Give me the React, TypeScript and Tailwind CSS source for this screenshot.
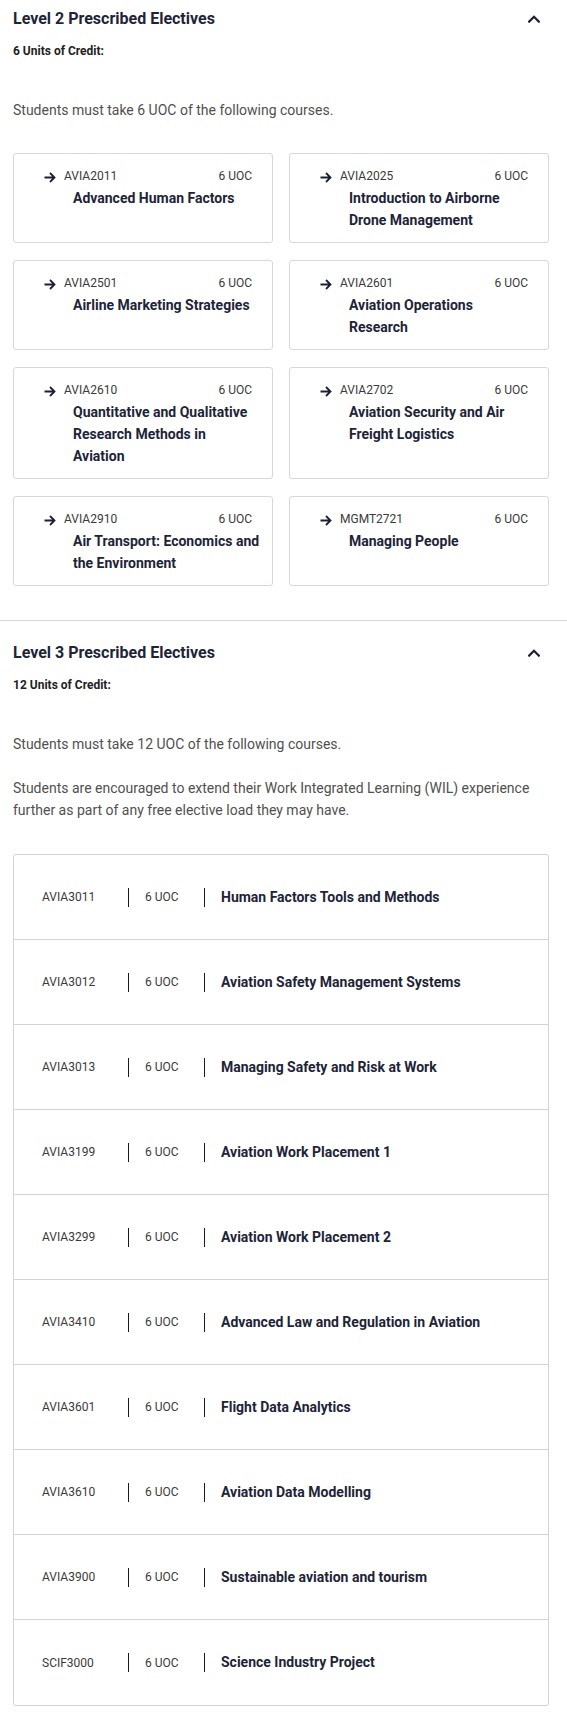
import React from "react";

type Course = { code: string; title: string };

const level2: Course[] = [
  { code: "AVIA2011", title: "Advanced Human Factors" },
  { code: "AVIA2025", title: "Introduction to Airborne Drone Management" },
  { code: "AVIA2501", title: "Airline Marketing Strategies" },
  { code: "AVIA2601", title: "Aviation Operations Research" },
  { code: "AVIA2610", title: "Quantitative and Qualitative Research Methods in Aviation" },
  { code: "AVIA2702", title: "Aviation Security and Air Freight Logistics" },
  { code: "AVIA2910", title: "Air Transport: Economics and the Environment" },
  { code: "MGMT2721", title: "Managing People" },
];

const level3: Course[] = [
  { code: "AVIA3011", title: "Human Factors Tools and Methods" },
  { code: "AVIA3012", title: "Aviation Safety Management Systems" },
  { code: "AVIA3013", title: "Managing Safety and Risk at Work" },
  { code: "AVIA3199", title: "Aviation Work Placement 1" },
  { code: "AVIA3299", title: "Aviation Work Placement 2" },
  { code: "AVIA3410", title: "Advanced Law and Regulation in Aviation" },
  { code: "AVIA3601", title: "Flight Data Analytics" },
  { code: "AVIA3610", title: "Aviation Data Modelling" },
  { code: "AVIA3900", title: "Sustainable aviation and tourism" },
  { code: "SCIF3000", title: "Science Industry Project" },
];

function ChevronUp() {
  return (
    <svg width="12" height="8" viewBox="0 0 12 8" className="mr-[9px]" fill="none">
      <path d="M1.2 6.6 L6 1.8 L10.8 6.6" stroke="#1b2133" strokeWidth="2.2" strokeLinecap="square" />
    </svg>
  );
}

function Arrow() {
  return (
    <svg width="12" height="11" viewBox="0 0 12 11" fill="none" className="mt-[2px] shrink-0">
      <path d="M0.5 5.5 H10.5 M6 1 L10.5 5.5 L6 10" stroke="#1b2133" strokeWidth="1.8" />
    </svg>
  );
}

function SectionHeader({ title, units }: { title: string; units: string }) {
  return (
    <>
      <div className="flex h-6 items-center justify-between">
        <h2 className="text-[16px] font-bold leading-6 text-[#1d2438]">{title}</h2>
        <ChevronUp />
      </div>
      <p className="mt-3 text-[12px] font-bold leading-4 text-[#222]">{units}</p>
    </>
  );
}

function CourseCard({ course }: { course: Course }) {
  return (
    <div className="rounded-[3px] border border-[#d8d8d8] bg-white pb-[11px] pl-[30px] pr-[20px] pt-[14px]">
      <div className="flex h-4 items-center text-[12px] text-[#3a3a3a]">
        <Arrow />
        <span className="ml-2">{course.code}</span>
        <span className="ml-auto">6 UOC</span>
      </div>
      {/* width picked so the titles break where the reference does */}
      <p className="ml-[29px] mt-[3px] w-[186.2px] text-[14px] font-bold leading-[22px] text-[#1d2438]">
        {course.title}
      </p>
    </div>
  );
}

function CourseRow({ course }: { course: Course }) {
  return (
    <div className="flex h-[85px] items-center pl-[28px] text-[12px] text-[#3a3a3a]">
      <span className="w-[86px]">{course.code}</span>
      <span className="h-[19px] w-px bg-[#1a1a1a]" />
      <span className="ml-4 w-[59px]">6 UOC</span>
      <span className="h-[19px] w-px bg-[#1a1a1a]" />
      <span className="ml-4 text-[14px] font-bold text-[#1d2438]">{course.title}</span>
    </div>
  );
}

export default function App() {
  return (
    <div className="min-h-[1715px] bg-white font-['Roboto',sans-serif]">
      <section className="pb-[34px] pl-[13px] pr-[18px] pt-[7px]">
        <SectionHeader title="Level 2 Prescribed Electives" units="6 Units of Credit:" />
        <p className="mt-10 text-[14px] leading-[22px] text-[#505050]">
          Students must take 6 UOC of the following courses.
        </p>
        <div className="mt-8 grid grid-cols-2 gap-x-4 gap-y-[17px]">
          {level2.map((c) => (
            <CourseCard key={c.code} course={c} />
          ))}
        </div>
      </section>

      <div className="h-px bg-[#d6d6d6]" />

      <section className="pb-3 pl-[13px] pr-[18px] pt-[20px]">
        <SectionHeader title="Level 3 Prescribed Electives" units="12 Units of Credit:" />
        <p className="mt-10 text-[14px] leading-[22px] text-[#505050]">
          Students must take 12 UOC of the following courses.
        </p>
        <p className="mt-[22px] text-[14px] leading-[22px] text-[#505050]">
          Students are encouraged to extend their Work Integrated Learning (WIL) experience further as part of any free
          elective load they may have.
        </p>
        <div className="mt-[33px] divide-y divide-[#d4d4d4] rounded-[3px] border border-[#d4d4d4]">
          {level3.map((c) => (
            <CourseRow key={c.code} course={c} />
          ))}
        </div>
      </section>
    </div>
  );
}
